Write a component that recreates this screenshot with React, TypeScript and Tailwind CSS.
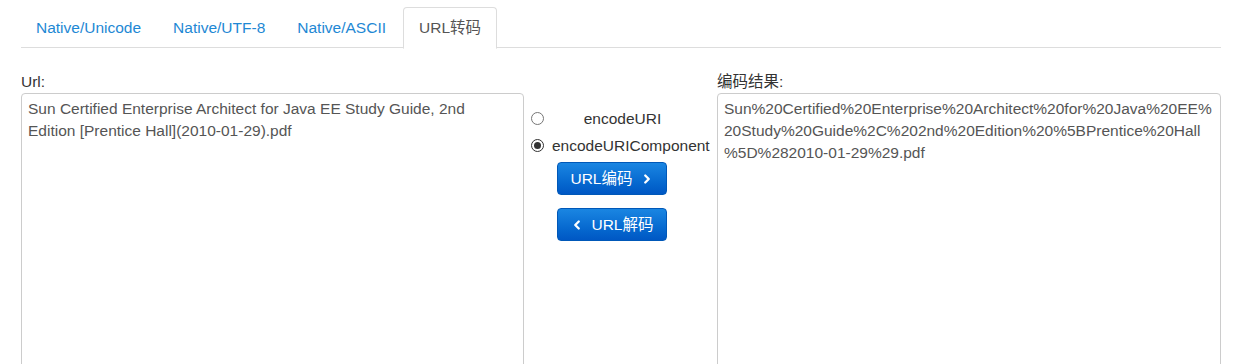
import { ChevronLeft, ChevronRight } from 'lucide-react'

const tabs = ['Native/Unicode', 'Native/UTF-8', 'Native/ASCII', 'URL转码']

const source = 'Sun Certified Enterprise Architect for Java EE Study Guide, 2nd Edition [Prentice Hall](2010-01-29).pdf'
const encodedLines = [
  'Sun%20Certified%20Enterprise%20Architect%20for%20Java%20EE%',
  '20Study%20Guide%2C%202nd%20Edition%20%5BPrentice%20Hall',
  '%5D%282010-01-29%29.pdf',
]

export default function App() {
  return (
    <div className="h-[364px] overflow-hidden bg-white pl-[21px] pt-[7px] text-[15.5px] text-[#333] [font-family:Arial,'Liberation_Sans','Noto_Sans_CJK_SC',sans-serif]">
      <div className="w-[1200px]">
        <ul className="flex h-[41px] border-b border-[#ddd]">
          {tabs.map((tab, i) => {
            const active = i === tabs.length - 1
            return (
              <li key={tab} className="mr-[2px] -mb-px">
                <a
                  className={
                    active
                      ? 'block h-[42px] rounded-t border border-[#ddd] border-b-transparent bg-white px-[15px] pt-[10px] leading-[20px] text-[#555]'
                      : 'block h-[41px] px-[15px] pt-[11px] leading-[20px] text-[#1e88d4]'
                  }
                >
                  {tab}
                </a>
              </li>
            )
          })}
        </ul>

        <div className="mt-[24px] flex">
          <div className="w-[503px]">
            <div className="h-[21px] leading-[20px]">Url:</div>
            <div className="h-[300px] rounded border border-[#ccc] pl-[6px] pr-[14px] pt-[4px] leading-[22px] text-[#555]">
              {source}
            </div>
          </div>

          <div className="w-[193px] pl-[7px] pt-[33px]">
            <label className="flex h-[27px] items-center">
              <span className="h-[13px] w-[13px] rounded-full border border-[#767676] bg-white" />
              <span className="flex-1 pr-[16px] text-center">encodeURI</span>
            </label>
            <label className="flex h-[27px] items-center">
              <span className="flex h-[13px] w-[13px] items-center justify-center rounded-full border border-[#333] bg-white">
                <span className="h-[7px] w-[7px] rounded-full bg-[#333]" />
              </span>
              <span className="ml-[8px] whitespace-nowrap">encodeURIComponent</span>
            </label>
            <div className="mt-[3px] flex flex-col gap-[13px] pl-[26px]">
              <button className="flex h-[33px] w-[110px] items-center justify-center gap-[7px] rounded border border-[#0058b8] bg-gradient-to-b from-[#1a86e2] to-[#0057c4] text-[15.5px] text-white">
                URL编码
                <ChevronRight size={14} strokeWidth={4} />
              </button>
              <button className="flex h-[33px] w-[110px] items-center justify-center gap-[7px] rounded border border-[#0058b8] bg-gradient-to-b from-[#1a86e2] to-[#0057c4] text-[15.5px] text-white">
                <ChevronLeft size={14} strokeWidth={4} />
                URL解码
              </button>
            </div>
          </div>

          <div className="w-[504px]">
            <div className="h-[21px] leading-[20px]">编码结果:</div>
            <div className="h-[300px] rounded border border-[#ccc] px-[6px] pt-[4px] leading-[22px] text-[#555]">
              {encodedLines.map((line) => (
                <div key={line} className="whitespace-nowrap">
                  {line}
                </div>
              ))}
            </div>
          </div>
        </div>
      </div>
    </div>
  )
}
